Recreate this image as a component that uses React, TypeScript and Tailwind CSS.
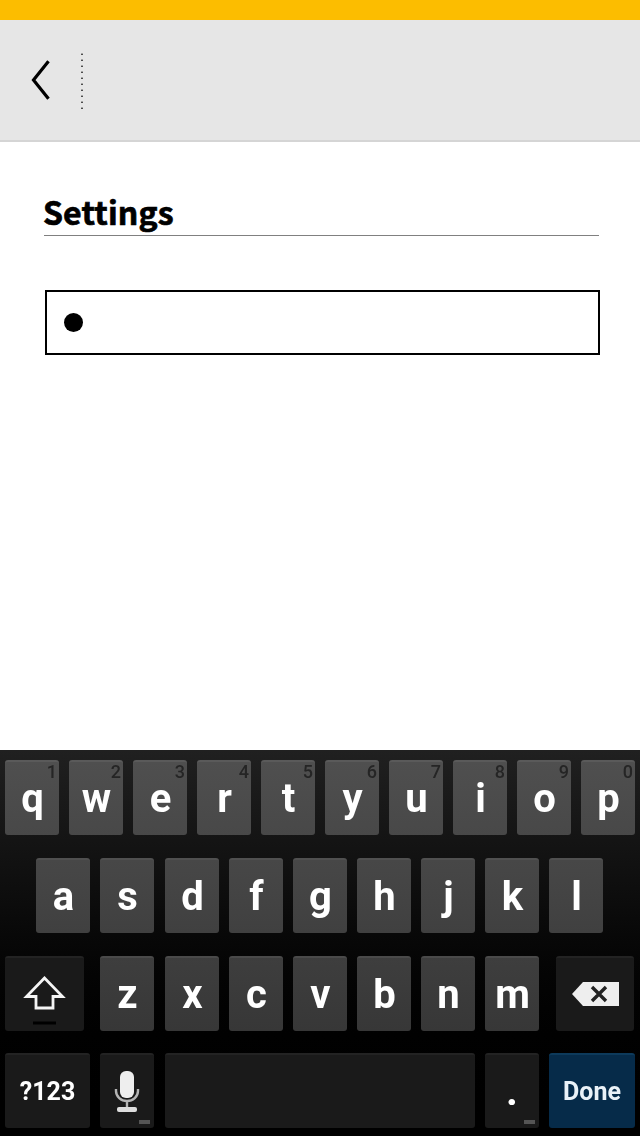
import type { ReactNode } from 'react';

const letterKey =
  'relative h-[75px] w-[54px] shrink-0 rounded-[3px] border-t-2 pl-px text-center font-[Roboto,sans-serif] text-[40px] font-bold leading-[73px] text-white';

const darkKey =
  'relative h-[75px] shrink-0 rounded-[3px] border-t-2 border-[#232323] bg-[#1a1a1a] text-center font-[Roboto,sans-serif] font-bold text-white';

function Letter({ label, hint, tone }: { label: string; hint?: string; tone: string }) {
  return (
    <button type="button" className={`${letterKey} ${tone}`}>
      {hint && (
        <span className="absolute right-[2px] top-[-1px] text-[18px] font-medium leading-[22px] text-[#252525] blur-[0.4px]">
          {hint}
        </span>
      )}
      <span className="block blur-[0.6px]">{label}</span>
    </button>
  );
}

function Icon({ children, className }: { children: ReactNode; className: string }) {
  return <span className={`block blur-[0.4px] ${className}`}>{children}</span>;
}

const topTone = 'border-[#5a5a5a] bg-linear-to-b from-[#4f4f4f] to-[#484848]';
const midTone = 'border-[#505050] bg-linear-to-b from-[#474747] to-[#404040]';
const lowTone = 'border-[#4a4a4a] bg-linear-to-b from-[#3e3e3e] to-[#373737]';

export default function App() {
  return (
    <div className="flex h-[1136px] w-[640px] flex-col overflow-hidden bg-white">
      <div className="h-5 shrink-0 bg-[#fcbd00]" />
      <header className="flex h-[122px] shrink-0 border-b-2 border-[#d5d5d5] bg-[#e6e6e6]">
        <button type="button" className="ml-[30px] mt-[39px] h-[42px] w-[21px]" aria-label="Back">
          <svg width="21" height="42" viewBox="0 0 21 42" fill="none" stroke="#000" strokeWidth="3.2">
            <path d="M18.5 2.3 L3.5 21 L18.5 39.7" />
          </svg>
        </button>
        <svg className="ml-[30px] mt-[33px]" width="2" height="58" viewBox="0 0 2 58">
          <path d="M1 0V58" stroke="#a5a5a5" strokeWidth="2" strokeDasharray="2 4" />
          <path d="M1 1V58" stroke="#4d4d4d" strokeWidth="2" strokeDasharray="1 5" />
        </svg>
      </header>

      <main className="flex-1 pl-11">
        <h1 className="mt-[46px] h-[48px] w-[555px] border-b border-[#808080] font-['Noto_Sans_CJK_SC',sans-serif] text-[32px] font-bold leading-[47px] tracking-[0.15px] text-black [-webkit-text-stroke:0.7px_#000]">
          <span className="-ml-px">Settings</span>
        </h1>
        <div className="ml-px mt-[54px] flex h-[65px] w-[555px] items-center border-2 border-black pl-[17px]">
          <span className="mb-px size-[19px] rounded-full bg-black" />
        </div>
      </main>

      <div className="flex h-[386px] shrink-0 flex-col gap-[22.8px] bg-linear-to-b from-[#202020] via-[#0c0c0c] via-40% to-black pl-[5px] pt-[10px]">
        <div className="flex gap-[10px]">
          {'qwertyuiop'.split('').map((c, i) => (
            <Letter key={c} label={c} hint={String((i + 1) % 10)} tone={topTone} />
          ))}
        </div>
        <div className="flex gap-[10px] pl-[31px] [&>*:nth-child(3)]:ml-px">
          {'asdfghjkl'.split('').map((c) => (
            <Letter key={c} label={c} tone={midTone} />
          ))}
        </div>
        <div className="flex">
          <button type="button" aria-label="Shift" className={`${darkKey} w-[79px]`}>
            <Icon className="ml-[17px] mt-[18px]">
              <svg width="46" height="54" viewBox="0 0 46 54" fill="none">
                <path d="M22.5 2 L4.5 20.5 H14 V32 H31 V20.5 H40.5 Z" stroke="#f5f5f5" strokeWidth="2.8" />
                <path d="M11 47H34" stroke="#000" strokeWidth="3" />
              </svg>
            </Icon>
          </button>
          <div className="ml-[16px] flex gap-[10px] [&>*:nth-child(2)]:ml-px">
            {'zxcvbnm'.split('').map((c) => (
              <Letter key={c} label={c} tone={lowTone} />
            ))}
          </div>
          <button type="button" aria-label="Delete" className={`${darkKey} ml-[17px] w-[78px]`}>
            <Icon className="ml-[15px]">
              <svg width="49" height="26" viewBox="0 0 49 26">
                <path d="M1 13 L12 1 H48 V25 H12 Z" fill="#eee" />
                <path d="M21 6 L35 20 M35 6 L21 20" stroke="#222" strokeWidth="3.4" />
              </svg>
            </Icon>
          </button>
        </div>
        <div className="flex">
          <button type="button" className={`${darkKey} w-[85px] text-[25px] leading-[74px]`}>
            <span className="block blur-[0.5px]">?123</span>
          </button>
          <button type="button" aria-label="Voice input" className={`${darkKey} ml-[10px] w-[54px]`}>
            <Icon className="ml-[14px] mt-0">
              <svg width="26" height="42" viewBox="0 0 26 42" fill="none">
                <path d="M2 18V20A11 10 0 0 0 24 20V18M13 30V37" stroke="#b5b5b5" strokeWidth="2.4" />
                <rect x="6" y="0" width="14" height="27" rx="6" fill="#eee" />
                <rect x="3" y="36" width="20" height="5" rx="2" fill="#ddd" />
              </svg>
            </Icon>
            <span className="absolute bottom-[4px] right-[4px] h-[4px] w-[11px] bg-[#555] blur-[0.4px]" />
          </button>
          <button type="button" aria-label="Space" className={`${darkKey} ml-[11px] w-[310px]`} />
          <button type="button" className={`${darkKey} ml-[10px] w-[54px] text-[41px] leading-[73px]`}>
            <span className="block blur-[0.5px]">.</span>
            <span className="absolute bottom-[4px] right-[4px] h-[4px] w-[11px] bg-[#555] blur-[0.4px]" />
          </button>
          <button
            type="button"
            className="ml-[10px] h-[75px] w-[86px] rounded-[3px] border-t-2 border-[#0d3a5b] bg-[#062b49] text-center font-[Roboto,sans-serif] text-[25px] font-bold leading-[74px] text-[#eaf2f8]"
          >
            <span className="block blur-[0.5px]">Done</span>
          </button>
        </div>
      </div>
    </div>
  );
}
